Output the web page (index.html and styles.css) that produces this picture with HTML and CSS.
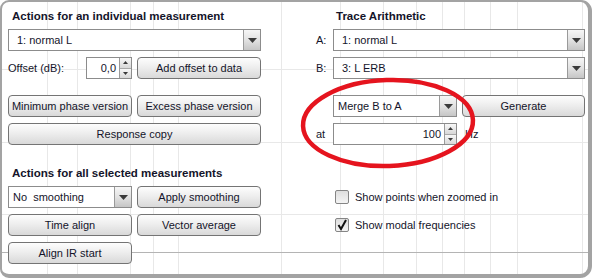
FILE: index.html
```html
<!DOCTYPE html>
<html lang="en">
<head>
  <meta charset="UTF-8" />
  <title>Measurement actions</title>
  <link rel="stylesheet" href="styles.css">
</head>
<body>
  <div class="panel">
    <div class="col left">
      <div class="heading">Actions for an individual measurement</div>
      <div class="combo">
        <span class="value">1: normal L</span>
        <span class="drop"><svg width="9" height="5" viewBox="0 0 9 5"><polygon points="0,0 9,0 4.5,5" /></svg></span>
      </div>
      <div class="row">
        <span class="label offset-label">Offset (dB):</span>
        <div class="spin offset">
          <span class="value num">0,0</span>
          <span class="arrows">
            <span class="arrow"><svg width="5" height="3" viewBox="0 0 5 3"><polygon points="0,3 5,3 2.5,0" /></svg></span>
            <span class="arrow"><svg width="5" height="3" viewBox="0 0 5 3"><polygon points="0,0 5,0 2.5,3" /></svg></span>
          </span>
        </div>
        <button class="btn half">Add offset to data</button>
      </div>
      <div class="row spaced">
        <button class="btn half">Minimum phase version</button>
        <button class="btn half">Excess phase version</button>
      </div>
      <button class="btn full">Response copy</button>

      <div class="heading second">Actions for all selected measurements</div>
      <div class="row">
        <div class="combo half narrow">
          <span class="value">No  smoothing</span>
          <span class="drop"><svg width="9" height="5" viewBox="0 0 9 5"><polygon points="0,0 9,0 4.5,5" /></svg></span>
        </div>
        <button class="btn half">Apply smoothing</button>
      </div>
      <div class="row">
        <button class="btn half">Time align</button>
        <button class="btn half">Vector average</button>
      </div>
      <div class="row">
        <button class="btn half">Align IR start</button>
      </div>
    </div>

    <div class="col right">
      <div class="heading indent">Trace Arithmetic</div>
      <div class="row">
        <span class="label tag">A:</span>
        <div class="combo grow">
          <span class="value">1: normal L</span>
          <span class="drop"><svg width="9" height="5" viewBox="0 0 9 5"><polygon points="0,0 9,0 4.5,5" /></svg></span>
        </div>
      </div>
      <div class="row">
        <span class="label tag">B:</span>
        <div class="combo grow">
          <span class="value">3: L ERB</span>
          <span class="drop"><svg width="9" height="5" viewBox="0 0 9 5"><polygon points="0,0 9,0 4.5,5" /></svg></span>
        </div>
      </div>
      <div class="row spaced">
        <span class="label tag"></span>
        <div class="combo op narrow">
          <span class="value">Merge B to A</span>
          <span class="drop"><svg width="9" height="5" viewBox="0 0 9 5"><polygon points="0,0 9,0 4.5,5" /></svg></span>
        </div>
        <button class="btn grow">Generate</button>
      </div>
      <div class="row">
        <span class="label tag">at</span>
        <div class="spin op">
          <span class="value num">100</span>
          <span class="arrows">
            <span class="arrow"><svg width="5" height="3" viewBox="0 0 5 3"><polygon points="0,3 5,3 2.5,0" /></svg></span>
            <span class="arrow"><svg width="5" height="3" viewBox="0 0 5 3"><polygon points="0,0 5,0 2.5,3" /></svg></span>
          </span>
        </div>
        <span class="label unit">Hz</span>
      </div>

      <label class="check first">
        <span class="box"></span>
        Show points when zoomed in
      </label>
      <label class="check">
        <span class="box"><svg width="12" height="12" viewBox="0 0 12 12"><polyline points="2.5,6 5,10 10,1" /></svg></span>
        Show modal frequencies
      </label>
    </div>

    <!-- hand drawn mark over the merge controls -->
    <svg class="circle" width="200" height="110" viewBox="0 0 200 110">
      <ellipse cx="100" cy="55" rx="85" ry="43" transform="rotate(-2 100 55)" />
    </svg>
  </div>
</body>
</html>
```

FILE: styles.css
```css
html, body {
  height: 100%;
}
body {
  margin: 0;
  font-family: "Liberation Sans", Arial, sans-serif;
  font-size: 11px;
  color: #14142a;
  background-color: #fff;
  background-repeat: no-repeat;
  background-image:
    linear-gradient(#b4b4b4, #b4b4b4),
    linear-gradient(#e8e8e8, #e8e8e8),
    linear-gradient(#e8e8e8, #e8e8e8),
    linear-gradient(#e8e8e8, #e8e8e8),
    linear-gradient(#e8e8e8, #e8e8e8),
    linear-gradient(#e8e8e8, #e8e8e8),
    linear-gradient(#e8e8e8, #e8e8e8),
    linear-gradient(#e8e8e8, #e8e8e8),
    linear-gradient(#e8e8e8, #e8e8e8),
    linear-gradient(#e8e8e8, #e8e8e8),
    linear-gradient(#e8e8e8, #e8e8e8),
    linear-gradient(#e8e8e8, #e8e8e8),
    linear-gradient(#e8e8e8, #e8e8e8),
    linear-gradient(#e8e8e8, #e8e8e8),
    linear-gradient(#e8e8e8, #e8e8e8),
    linear-gradient(#e8e8e8, #e8e8e8),
    linear-gradient(#e8e8e8, #e8e8e8),
    linear-gradient(#e8e8e8, #e8e8e8);
  background-size:
    100% 1px,
    100% 1px, 100% 1px, 100% 1px,
    1px 100%, 1px 100%, 1px 100%, 1px 100%, 1px 100%, 1px 100%, 1px 100%,
    1px 100%, 1px 100%, 1px 100%, 1px 100%, 1px 100%, 1px 100%, 1px 100%;
  background-position:
    0 252px,
    0 69px, 0 142px, 0 214px,
    47px 0, 77px 0, 130px 0, 153px 0, 178px 0, 281px 0, 340px 0,
    383px 0, 416px 0, 442px 0, 464px 0, 490px 0, 517px 0, 582px 0;
}

.panel {
  position: relative;
  box-sizing: border-box;
  width: 592px;
  height: 278px;
  display: flex;
  padding: 7px 0 0 6px;
  border: solid #a3a3a3;
  border-width: 2px 4px 4px 2px;
  border-radius: 9px 11px 12px 9px;
}

.col {
  display: flex;
  flex-direction: column;
  gap: 6px;
}
.left {
  width: 253px;
}
.right {
  width: 269px;
  margin-left: 55px;
}

.heading {
  height: 14px;
  line-height: 14px;
  font-size: 11.5px;
  font-weight: bold;
  padding-left: 4px;
  white-space: nowrap;
}
.heading.second {
  margin-top: 15px;
}
.heading.indent {
  padding-left: 20px;
}

.row {
  display: flex;
  align-items: center;
  gap: 5px;
}
.row.spaced {
  margin-top: 10px;
}

.label {
  line-height: 22px;
}
.offset-label {
  width: 73px;
}
.tag {
  width: 12px;
}
.unit {
  margin-left: 3px;
}

.btn {
  box-sizing: border-box;
  height: 22px;
  margin: 0;
  padding: 0;
  border: 1px solid #747474;
  border-radius: 4px;
  background: linear-gradient(#fdfdfd, #eeeeee 45%, #d9d9d9);
  font: inherit;
  color: inherit;
  white-space: nowrap;
}
.half {
  width: 124px;
}
.full {
  width: 253px;
}
.grow {
  flex: 1;
}

.combo, .spin {
  box-sizing: border-box;
  height: 22px;
  display: flex;
  border: 1px solid #8c8c8c;
  background: #fff;
}
.value {
  flex: 1;
  line-height: 20px;
  padding-left: 8px;
  white-space: pre;
}
.narrow .value {
  padding-left: 4px;
}
.num {
  text-align: right;
  padding: 0 3px 0 0;
}
.drop {
  width: 16px;
  display: flex;
  align-items: center;
  justify-content: center;
  border-left: 1px solid #9a9a9a;
  background: linear-gradient(#f6f6f6, #e2e2e2 50%, #c6c6c6);
}
.drop polygon, .arrow polygon {
  fill: #3a3a3a;
}
.op {
  width: 124px;
}
.offset {
  width: 46px;
}

.arrows {
  width: 11px;
  display: flex;
  flex-direction: column;
  border-left: 1px solid #9a9a9a;
}
.arrow {
  flex: 1;
  display: flex;
  align-items: center;
  justify-content: center;
  background: linear-gradient(#f8f8f8, #d8d8d8);
}
.arrow + .arrow {
  border-top: 1px solid #a8a8a8;
}

.check {
  display: flex;
  align-items: center;
  gap: 6px;
  height: 14px;
  padding-left: 19px;
}
.check.first {
  margin-top: 39px;
}
.check + .check {
  margin-top: 8px;
}
.box {
  box-sizing: border-box;
  width: 14px;
  height: 14px;
  display: flex;
  align-items: center;
  justify-content: center;
  border: 1px solid #858585;
  border-radius: 2px;
  background: linear-gradient(#dedede, #f4f4f4);
}
.box polyline {
  fill: none;
  stroke: #111;
  stroke-width: 2;
}

.circle {
  position: absolute;
  left: 286px;
  top: 66px;
  pointer-events: none;
}
.circle ellipse {
  fill: none;
  stroke: #e5141e;
  stroke-width: 4.5;
}
```
